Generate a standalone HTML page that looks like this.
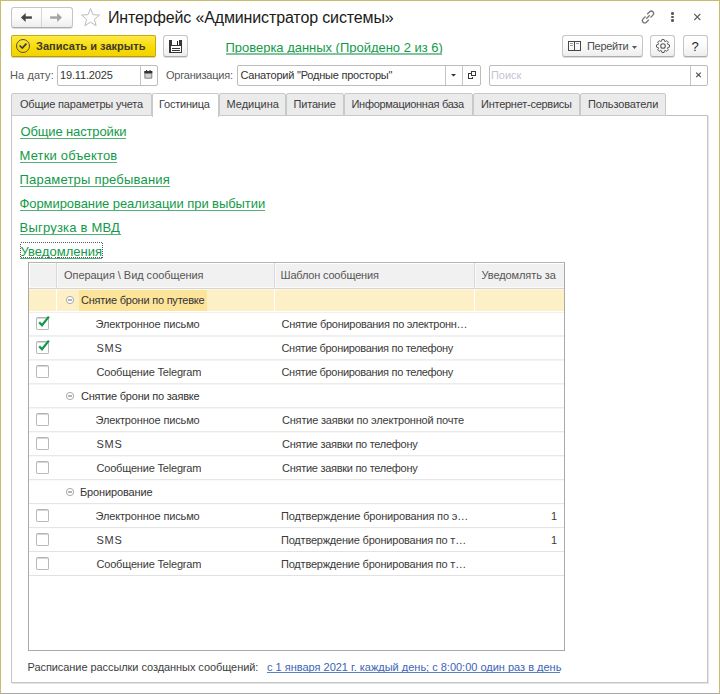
<!DOCTYPE html>
<html><head><meta charset="utf-8">
<style>
*{box-sizing:border-box;margin:0;padding:0}
html,body{width:720px;height:694px;overflow:hidden;background:#fff}
body{position:relative;font-family:"Liberation Sans",sans-serif;font-size:11px;color:#333}
.a{position:absolute}
.t{position:absolute;white-space:nowrap}
.btn{position:absolute;border:1px solid #c6c6c6;border-bottom-color:#acacac;border-radius:3px;background:linear-gradient(#ffffff 0%,#fbfbfb 50%,#ededed 100%);box-shadow:0 1px 0 #dcdcdc}
.fld{position:absolute;border:1px solid #bcbcbc;border-radius:2px;background:#fff}
.vs{position:absolute;top:0;bottom:0;width:1px;background:#c4c4c4}
.tab{position:absolute;top:93px;height:23px;border:1px solid #c9c9c9;border-radius:2px 2px 0 0;background:#ebebeb}
.ul{position:absolute;height:1px;background:#52b276}
.cb{position:absolute;left:36px;width:13px;height:13px;border:1px solid #b9b9b9;border-top-color:#b3b3b3;border-radius:2px;background:#fff;box-shadow:inset 0 1px 0 #d6d6d6}
</style></head><body>
<div class="a" style="left:0;top:0;width:720px;height:694px;border:1px solid #c9bb6c;border-bottom-color:#a6a6a6"></div>
<div class="btn" style="left:11px;top:7px;width:62px;height:21px"></div>
<div class="a" style="left:41px;top:8px;width:1px;height:19px;background:#d6d6d6"></div>
<svg class="a" style="left:0;top:0" width="80" height="30" viewBox="0 0 80 30"><path d="M20.9 17.55L25.7 13.1V22Z" fill="#444"/><rect x="25" y="16.35" width="6.9" height="2.4" fill="#444"/><path d="M61.9 17.55L57.1 13.1V22Z" fill="#a2a2a2"/><rect x="50.1" y="16.35" width="7.5" height="2.4" fill="#a2a2a2"/></svg>
<svg class="a" style="left:78px;top:6px" width="25" height="23" viewBox="0 0 25 23"><path d="M12.50 2.50 L14.91 8.68 L21.54 9.06 L16.40 13.27 L18.08 19.69 L12.50 16.10 L6.92 19.69 L8.60 13.27 L3.46 9.06 L10.09 8.68Z" fill="none" stroke="#b9bcc2" stroke-width="1" stroke-linejoin="miter"/></svg>
<div class="t" style="left:108.0px;top:10px;font-size:16px;line-height:16px;letter-spacing:-0.131px;color:#1a1a1a;">Интерфейс «Администратор системы»</div>
<svg class="a" style="left:640px;top:9px" width="16" height="16" viewBox="0 0 16 16"><g fill="none" stroke="#737373" stroke-width="1.25"><path d="M7.2 5.2L9.6 2.8a2.3 2.3 0 0 1 3.3 3.3L10.5 8.5"/><path d="M5.5 7.5L3.1 9.9a2.3 2.3 0 0 0 3.3 3.3L8.8 10.8"/><path d="M6.3 9.7L9.7 6.3"/></g></svg>
<div class="a" style="left:671.15px;top:12.05px;width:2.5px;height:2.5px;border-radius:50%;background:#5a5a5a"></div>
<div class="a" style="left:671.15px;top:15.55px;width:2.5px;height:2.5px;border-radius:50%;background:#5a5a5a"></div>
<div class="a" style="left:671.15px;top:19.05px;width:2.5px;height:2.5px;border-radius:50%;background:#5a5a5a"></div>
<svg class="a" style="left:693px;top:13px" width="9" height="9" viewBox="0 0 9 9"><path d="M1.3 1.0L7.3 7.0M7.3 1.0L1.3 7.0" stroke="#606060" stroke-width="1.1"/></svg>
<div class="a" style="left:11px;top:35px;width:145px;height:22px;border:1px solid #c9a90c;border-bottom-color:#b89a08;border-radius:2px;background:linear-gradient(#fdea45,#f7da06 60%,#f2d300);box-shadow:0 1px 0 #dcd6b0"></div>
<svg class="a" style="left:15px;top:38px" width="16" height="16" viewBox="0 0 16 16"><circle cx="8" cy="8" r="6.5" fill="none" stroke="#57523a" stroke-width="1"/><path d="M4.6 7.5L7.3 10L11.4 5.6" fill="none" stroke="#353a55" stroke-width="1.7"/></svg>
<div class="t" style="left:36.0px;top:41px;font-size:11px;line-height:11px;letter-spacing:0.024px;color:#3b3a2c;font-weight:bold;">Записать и закрыть</div>
<div class="btn" style="left:163px;top:35px;width:25px;height:22px"></div>
<svg class="a" style="left:169px;top:40px" width="13" height="13" viewBox="0 0 13 13" shape-rendering="crispEdges"><path d="M0 0H12L13 1V13H0Z" fill="#363636"/><rect x="3" y="0" width="7" height="5" fill="#fff"/><rect x="8" y="1" width="1" height="4" fill="#222"/><rect x="2" y="6" width="10" height="6" fill="#fff"/><rect x="3" y="8" width="8" height="1" fill="#363636"/><rect x="3" y="10" width="8" height="1" fill="#363636"/></svg>
<div class="t" style="left:225.5px;top:41px;font-size:13px;line-height:13px;letter-spacing:-0.022px;color:#139a49;">Проверка данных (Пройдено 2 из 6)</div>
<div class="a" style="left:226px;top:53px;width:216px;height:2px;background:#7cc69a"></div>
<div class="btn" style="left:562px;top:35px;width:81px;height:22px"></div>
<svg class="a" style="left:568px;top:41px" width="13" height="10" viewBox="0 0 13 10" shape-rendering="crispEdges"><g fill="#474747"><rect x="0" y="0" width="13" height="1"/><rect x="0" y="9" width="13" height="1"/><rect x="0" y="0" width="1" height="10"/><rect x="12" y="0" width="1" height="10"/><rect x="6" y="0" width="1" height="10"/></g><g fill="#9a9a9a"><rect x="2" y="2" width="3" height="1"/><rect x="2" y="4" width="3" height="1"/><rect x="8" y="2" width="3" height="1"/></g></svg>
<div class="t" style="left:587.0px;top:41px;font-size:11px;line-height:11px;letter-spacing:-0.317px;color:#4d4d4d;">Перейти</div>
<svg class="a" style="left:632px;top:46px" width="6" height="4" viewBox="0 0 6 4"><path d="M0 0H5L2.5 3Z" fill="#555"/></svg>
<div class="btn" style="left:650px;top:35px;width:25px;height:22px"></div>
<svg class="a" style="left:655px;top:38px" width="16" height="16" viewBox="0 0 16 16"><path d="M12.64 6.41 L14.51 6.92 L14.51 9.08 L12.64 9.59 L12.40 10.16 L13.37 11.84 L11.84 13.37 L10.16 12.40 L9.59 12.64 L9.08 14.51 L6.92 14.51 L6.41 12.64 L5.84 12.40 L4.16 13.37 L2.63 11.84 L3.60 10.16 L3.36 9.59 L1.49 9.08 L1.49 6.92 L3.36 6.41 L3.60 5.84 L2.63 4.16 L4.16 2.63 L5.84 3.60 L6.41 3.36 L6.92 1.49 L9.08 1.49 L9.59 3.36 L10.16 3.60 L11.84 2.63 L13.37 4.16 L12.40 5.84Z" fill="none" stroke="#5c5c5c" stroke-width="1" stroke-linejoin="round"/><circle cx="8" cy="8" r="2.3" fill="none" stroke="#5c5c5c" stroke-width="1.1"/></svg>
<div class="btn" style="left:683px;top:35px;width:25px;height:22px"></div>
<div class="t" style="left:691.5px;top:40px;font-size:13px;line-height:13px;color:#1e1e1e">?</div>
<div class="t" style="left:10.0px;top:70px;font-size:11px;line-height:11px;letter-spacing:0.086px;color:#595959;">На дату:</div>
<div class="fld" style="left:57px;top:65px;width:101px;height:21px"><div class="vs" style="left:82px"></div></div>
<div class="t" style="left:60.0px;top:70px;font-size:11px;line-height:11px;letter-spacing:-0.156px;color:#333;">19.11.2025</div>
<svg class="a" style="left:144px;top:70px" width="9" height="9" viewBox="0 0 9 9"><rect x="0.3" y="1" width="8" height="7.7" rx="1" fill="#8a8a8a"/><rect x="0.3" y="1" width="8" height="2.2" fill="#333"/><rect x="1.4" y="3.9" width="5.8" height="3.8" fill="#d2d2d2"/><rect x="2" y="0" width="1.1" height="2" fill="#333"/><rect x="5.5" y="0" width="1.1" height="2" fill="#333"/></svg>
<div class="t" style="left:166.0px;top:70px;font-size:11px;line-height:11px;letter-spacing:-0.218px;color:#595959;">Организация:</div>
<div class="fld" style="left:237px;top:65px;width:244px;height:21px"><div class="vs" style="left:207px"></div><div class="vs" style="left:224px"></div></div>
<div class="t" style="left:240.5px;top:70px;font-size:11px;line-height:11px;letter-spacing:-0.215px;color:#333;">Санаторий "Родные просторы"</div>
<svg class="a" style="left:0;top:0" width="720" height="100" viewBox="0 0 720 100"><path d="M451 74H456L453.5 76.6Z" fill="#333"/><g fill="#383838" shape-rendering="crispEdges"><rect x="471" y="71" width="5" height="1"/><rect x="471" y="75" width="5" height="1"/><rect x="471" y="71" width="1" height="5"/><rect x="475" y="71" width="1" height="5"/><rect x="468" y="73" width="1" height="6"/><rect x="468" y="78" width="5" height="1"/><rect x="472" y="77" width="1" height="1"/><rect x="468" y="73" width="3" height="1"/></g></svg>
<div class="fld" style="left:489px;top:65px;width:219px;height:21px"><div class="vs" style="left:200px"></div></div>
<div class="t" style="left:491.0px;top:70px;font-size:11px;line-height:11px;letter-spacing:-0.05px;color:#c4c4d4;">Поиск</div>
<svg class="a" style="left:695px;top:72px" width="7" height="6" viewBox="0 0 7 6"><path d="M1.2 0.6L5.8 5.2M5.8 0.6L1.2 5.2" stroke="#4a4a4a" stroke-width="1.1"/></svg>
<div class="a" style="left:11px;top:115px;width:697px;height:568px;border:1px solid #c6c6c6;border-top-color:#c0c0c0;box-shadow:1px 1px 0 #e4e4e4"></div>
<div class="tab" style="left:11px;width:141px"></div>
<div class="tab" style="left:152px;width:67px;background:#fff;border-bottom:none;height:24px"></div>
<div class="tab" style="left:219px;width:67px"></div>
<div class="tab" style="left:286px;width:58px"></div>
<div class="tab" style="left:344px;width:129px"></div>
<div class="tab" style="left:473px;width:107px"></div>
<div class="tab" style="left:580px;width:86px"></div>
<div class="t" style="left:20.0px;top:99px;font-size:11px;line-height:11px;letter-spacing:-0.19px;color:#3d3d3d;">Общие параметры учета</div>
<div class="t" style="left:159.0px;top:99px;font-size:11px;line-height:11px;letter-spacing:-0.225px;color:#3d3d3d;">Гостиница</div>
<div class="t" style="left:226.5px;top:99px;font-size:11px;line-height:11px;letter-spacing:-0.0px;color:#3d3d3d;">Медицина</div>
<div class="t" style="left:293.5px;top:99px;font-size:11px;line-height:11px;letter-spacing:-0.183px;color:#3d3d3d;">Питание</div>
<div class="t" style="left:351.5px;top:99px;font-size:11px;line-height:11px;letter-spacing:-0.294px;color:#3d3d3d;">Информационная база</div>
<div class="t" style="left:481.0px;top:99px;font-size:11px;line-height:11px;letter-spacing:-0.253px;color:#3d3d3d;">Интернет-сервисы</div>
<div class="t" style="left:588.0px;top:99px;font-size:11px;line-height:11px;letter-spacing:-0.136px;color:#3d3d3d;">Пользователи</div>
<div class="t" style="left:20.5px;top:125px;font-size:13px;line-height:13px;letter-spacing:-0.136px;color:#139a49;">Общие настройки</div>
<div class="ul" style="left:20px;top:138px;width:106px"></div>
<div class="t" style="left:19.5px;top:149px;font-size:13px;line-height:13px;letter-spacing:0.162px;color:#139a49;">Метки объектов</div>
<div class="ul" style="left:20px;top:162px;width:97px"></div>
<div class="t" style="left:19.5px;top:173px;font-size:13px;line-height:13px;letter-spacing:0.2px;color:#139a49;">Параметры пребывания</div>
<div class="ul" style="left:20px;top:186px;width:150px"></div>
<div class="t" style="left:19.5px;top:197px;font-size:13px;line-height:13px;letter-spacing:-0.076px;color:#139a49;">Формирование реализации при выбытии</div>
<div class="ul" style="left:20px;top:210px;width:245px"></div>
<div class="t" style="left:19.5px;top:221px;font-size:13px;line-height:13px;letter-spacing:0.208px;color:#139a49;">Выгрузка в МВД</div>
<div class="ul" style="left:20px;top:234px;width:101px"></div>
<div class="t" style="left:20.5px;top:245px;font-size:13px;line-height:13px;letter-spacing:0.03px;color:#139a49;">Уведомления</div>
<div class="ul" style="left:20px;top:258px;width:82px"></div>
<svg class="a" style="left:20px;top:242px" width="83" height="16" viewBox="0 0 83 16" shape-rendering="crispEdges"><rect x="0.5" y="0.5" width="82" height="15" fill="none" stroke="#5a5a5a" stroke-width="1" stroke-dasharray="1 1"/></svg>
<div class="a" style="left:28px;top:262px;width:537px;height:389px;border:1px solid #a9a9a9;border-top-color:#b5b5b5;background:#fff"></div>
<div class="a" style="left:29px;top:263px;width:535px;height:26px;background:#f1f1f1;border-bottom:1px solid #d5d5d9;box-shadow:inset 1px 1px 0 #fff,inset 0 -1px 0 #fafafa"></div>
<div class="a" style="left:56px;top:263px;width:1px;height:25px;background:#d9d9d9;box-shadow:1px 0 0 #fafafa"></div>
<div class="a" style="left:274px;top:263px;width:1px;height:25px;background:#d9d9d9;box-shadow:1px 0 0 #fafafa"></div>
<div class="a" style="left:474px;top:263px;width:1px;height:25px;background:#d9d9d9;box-shadow:1px 0 0 #fafafa"></div>
<div class="t" style="left:64.0px;top:270px;font-size:11px;line-height:11px;letter-spacing:-0.052px;color:#555;">Операция \ Вид сообщения</div>
<div class="t" style="left:280.5px;top:270px;font-size:11px;line-height:11px;letter-spacing:-0.187px;color:#555;">Шаблон сообщения</div>
<div class="t" style="left:481.5px;top:270px;font-size:11px;line-height:11px;letter-spacing:-0.092px;color:#555;">Уведомлять за</div>
<div class="a" style="left:29px;top:311px;width:535px;height:1px;background:rgb(240,240,240)"></div>
<div class="a" style="left:29px;top:312px;width:535px;height:1px;background:rgb(240,240,240)"></div>
<div class="a" style="left:29px;top:289px;width:535px;height:23px;background:linear-gradient(#fff7dd 0,#fff7dd 1px,#fdf0c7 1px,#fdf0c7 22px,#fff 22px)"></div>
<div class="a" style="left:79px;top:290px;width:128px;height:21px;background:#fde49b"></div>
<div class="a" style="left:56px;top:289px;width:1px;height:23px;background:#fff"></div>
<div class="a" style="left:274px;top:289px;width:1px;height:23px;background:#fff"></div>
<div class="a" style="left:474px;top:289px;width:1px;height:23px;background:#fff"></div>
<svg class="a" style="left:65px;top:295px" width="10" height="10" viewBox="0 0 10 10"><circle cx="5" cy="5" r="3.6" fill="#fff" stroke="#a8a8a8" stroke-width="1"/><path d="M3 5H7" stroke="#8c8c8c" stroke-width="1.3"/></svg>
<div class="t" style="left:81.0px;top:295px;font-size:11px;line-height:11px;letter-spacing:-0.227px;color:#333;">Снятие брони по путевке</div>
<div class="a" style="left:29px;top:335px;width:535px;height:1px;background:rgb(239,239,239)"></div>
<div class="a" style="left:29px;top:336px;width:535px;height:1px;background:rgb(241,241,241)"></div>
<div class="cb" style="top:317px"></div>
<svg class="a" style="left:37px;top:315px" width="14" height="13" viewBox="0 0 14 13"><path d="M2.2 7.2L5 10.2L11.9 1.6" fill="none" stroke="#169a4a" stroke-width="2.3"/></svg>
<div class="t" style="left:95.5px;top:319px;font-size:11px;line-height:11px;letter-spacing:-0.147px;color:#3a3a3a;">Электронное письмо</div>
<div class="t" style="left:281.5px;top:319px;font-size:11px;line-height:11px;letter-spacing:-0.272px;color:#3a3a3a;">Снятие бронирования по электронн…</div>
<div class="a" style="left:29px;top:359px;width:535px;height:1px;background:rgb(237,237,237)"></div>
<div class="a" style="left:29px;top:360px;width:535px;height:1px;background:rgb(243,243,243)"></div>
<div class="cb" style="top:341px"></div>
<svg class="a" style="left:37px;top:339px" width="14" height="13" viewBox="0 0 14 13"><path d="M2.2 7.2L5 10.2L11.9 1.6" fill="none" stroke="#169a4a" stroke-width="2.3"/></svg>
<div class="t" style="left:96.5px;top:343px;font-size:11px;line-height:11px;letter-spacing:0.7px;color:#3a3a3a;">SMS</div>
<div class="t" style="left:281.5px;top:343px;font-size:11px;line-height:11px;letter-spacing:-0.32px;color:#3a3a3a;">Снятие бронирования по телефону</div>
<div class="a" style="left:29px;top:383px;width:535px;height:1px;background:rgb(236,236,236)"></div>
<div class="a" style="left:29px;top:384px;width:535px;height:1px;background:rgb(244,244,244)"></div>
<div class="cb" style="top:365px"></div>
<div class="t" style="left:96.5px;top:367px;font-size:11px;line-height:11px;letter-spacing:-0.194px;color:#3a3a3a;">Сообщение Telegram</div>
<div class="t" style="left:281.5px;top:367px;font-size:11px;line-height:11px;letter-spacing:-0.32px;color:#3a3a3a;">Снятие бронирования по телефону</div>
<div class="a" style="left:29px;top:407px;width:535px;height:1px;background:rgb(235,235,235)"></div>
<div class="a" style="left:29px;top:408px;width:535px;height:1px;background:rgb(245,245,245)"></div>
<svg class="a" style="left:65px;top:391px" width="10" height="10" viewBox="0 0 10 10"><circle cx="5" cy="5" r="3.6" fill="#fff" stroke="#a8a8a8" stroke-width="1"/><path d="M3 5H7" stroke="#8c8c8c" stroke-width="1.3"/></svg>
<div class="t" style="left:81.0px;top:391px;font-size:11px;line-height:11px;letter-spacing:-0.224px;color:#333;">Снятие брони по заявке</div>
<div class="a" style="left:29px;top:431px;width:535px;height:1px;background:rgb(233,233,233)"></div>
<div class="a" style="left:29px;top:432px;width:535px;height:1px;background:rgb(247,247,247)"></div>
<div class="cb" style="top:413px"></div>
<div class="t" style="left:95.5px;top:415px;font-size:11px;line-height:11px;letter-spacing:-0.147px;color:#3a3a3a;">Электронное письмо</div>
<div class="t" style="left:282.0px;top:415px;font-size:11px;line-height:11px;letter-spacing:-0.197px;color:#3a3a3a;">Снятие заявки по электронной почте</div>
<div class="a" style="left:29px;top:455px;width:535px;height:1px;background:rgb(232,232,232)"></div>
<div class="a" style="left:29px;top:456px;width:535px;height:1px;background:rgb(248,248,248)"></div>
<div class="cb" style="top:437px"></div>
<div class="t" style="left:96.5px;top:439px;font-size:11px;line-height:11px;letter-spacing:0.7px;color:#3a3a3a;">SMS</div>
<div class="t" style="left:282.0px;top:439px;font-size:11px;line-height:11px;letter-spacing:-0.279px;color:#3a3a3a;">Снятие заявки по телефону</div>
<div class="a" style="left:29px;top:479px;width:535px;height:1px;background:rgb(231,231,231)"></div>
<div class="a" style="left:29px;top:480px;width:535px;height:1px;background:rgb(249,249,249)"></div>
<div class="cb" style="top:461px"></div>
<div class="t" style="left:96.5px;top:463px;font-size:11px;line-height:11px;letter-spacing:-0.194px;color:#3a3a3a;">Сообщение Telegram</div>
<div class="t" style="left:282.0px;top:463px;font-size:11px;line-height:11px;letter-spacing:-0.279px;color:#3a3a3a;">Снятие заявки по телефону</div>
<div class="a" style="left:29px;top:503px;width:535px;height:1px;background:rgb(229,229,229)"></div>
<div class="a" style="left:29px;top:504px;width:535px;height:1px;background:rgb(251,251,251)"></div>
<svg class="a" style="left:65px;top:487px" width="10" height="10" viewBox="0 0 10 10"><circle cx="5" cy="5" r="3.6" fill="#fff" stroke="#a8a8a8" stroke-width="1"/><path d="M3 5H7" stroke="#8c8c8c" stroke-width="1.3"/></svg>
<div class="t" style="left:80.0px;top:487px;font-size:11px;line-height:11px;letter-spacing:-0.136px;color:#333;">Бронирование</div>
<div class="a" style="left:29px;top:527px;width:535px;height:1px;background:rgb(228,228,228)"></div>
<div class="a" style="left:29px;top:528px;width:535px;height:1px;background:rgb(252,252,252)"></div>
<div class="cb" style="top:509px"></div>
<div class="t" style="left:95.5px;top:511px;font-size:11px;line-height:11px;letter-spacing:-0.147px;color:#3a3a3a;">Электронное письмо</div>
<div class="t" style="left:281.0px;top:511px;font-size:11px;line-height:11px;letter-spacing:-0.165px;color:#3a3a3a;">Подтверждение бронирования по э…</div>
<div class="t" style="left:551px;top:511px;font-size:11px;line-height:11px;color:#3a3a3a">1</div>
<div class="a" style="left:29px;top:551px;width:535px;height:1px;background:rgb(226,226,226)"></div>
<div class="cb" style="top:533px"></div>
<div class="t" style="left:96.5px;top:535px;font-size:11px;line-height:11px;letter-spacing:0.7px;color:#3a3a3a;">SMS</div>
<div class="t" style="left:281.0px;top:535px;font-size:11px;line-height:11px;letter-spacing:-0.21px;color:#3a3a3a;">Подтверждение бронирования по т…</div>
<div class="t" style="left:551px;top:535px;font-size:11px;line-height:11px;color:#3a3a3a">1</div>
<div class="a" style="left:29px;top:575px;width:535px;height:1px;background:rgb(225,225,225)"></div>
<div class="cb" style="top:557px"></div>
<div class="t" style="left:96.5px;top:559px;font-size:11px;line-height:11px;letter-spacing:-0.194px;color:#3a3a3a;">Сообщение Telegram</div>
<div class="t" style="left:281.0px;top:559px;font-size:11px;line-height:11px;letter-spacing:-0.21px;color:#3a3a3a;">Подтверждение бронирования по т…</div>
<div class="t" style="left:27.5px;top:662px;font-size:11px;line-height:11px;letter-spacing:-0.067px;color:#3d3d3d;">Расписание рассылки созданных сообщений:</div>
<div class="t" style="left:267.0px;top:662px;font-size:11px;line-height:11px;letter-spacing:-0.007px;color:#3a64b8;">с 1 января 2021 г. каждый день; с 8:00:00 один раз в день</div>
<div class="a" style="left:267px;top:672px;width:293px;height:1px;background:#5b80c4"></div>
</body></html>
